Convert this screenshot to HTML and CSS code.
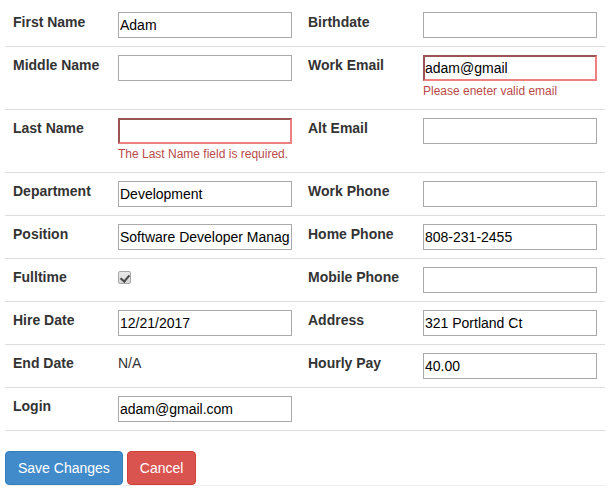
FILE: index.html
```html
<!DOCTYPE html>
<html lang="en">
<head>
<meta charset="utf-8">
<title>Edit Employee</title>
<link rel="stylesheet" href="styles.css">
</head>
<body>
<form class="employee-form">
  <div class="form-grid">
    <div class="cell label">First Name</div>
    <div class="cell"><input class="field" type="text" value="Adam"></div>
    <div class="cell label">Birthdate</div>
    <div class="cell"><input class="field" type="text" value=""></div>

    <div class="cell label">Middle Name</div>
    <div class="cell"><input class="field" type="text" value=""></div>
    <div class="cell label">Work Email</div>
    <div class="cell">
      <input class="field field-error" type="text" value="adam@gmail">
      <span class="error-text">Please eneter valid email</span>
    </div>

    <div class="cell label">Last Name</div>
    <div class="cell">
      <input class="field field-error" type="text" value="">
      <span class="error-text">The Last Name field is required.</span>
    </div>
    <div class="cell label">Alt Email</div>
    <div class="cell"><input class="field" type="text" value=""></div>

    <div class="cell label">Department</div>
    <div class="cell"><input class="field" type="text" value="Development"></div>
    <div class="cell label">Work Phone</div>
    <div class="cell"><input class="field" type="text" value=""></div>

    <div class="cell label">Position</div>
    <div class="cell"><input class="field" type="text" value="Software Developer Manager"></div>
    <div class="cell label">Home Phone</div>
    <div class="cell"><input class="field" type="text" value="808-231-2455"></div>

    <div class="cell label">Fulltime</div>
    <div class="cell"><input class="check" type="checkbox" checked disabled></div>
    <div class="cell label">Mobile Phone</div>
    <div class="cell"><input class="field" type="text" value=""></div>

    <div class="cell label">Hire Date</div>
    <div class="cell"><input class="field" type="text" value="12/21/2017"></div>
    <div class="cell label">Address</div>
    <div class="cell"><input class="field" type="text" value="321 Portland Ct"></div>

    <div class="cell label">End Date</div>
    <div class="cell value">N/A</div>
    <div class="cell label">Hourly Pay</div>
    <div class="cell"><input class="field" type="text" value="40.00"></div>

    <div class="cell label">Login</div>
    <div class="cell"><input class="field" type="text" value="adam@gmail.com"></div>
    <div class="cell label"></div>
    <div class="cell"></div>
  </div>

  <div class="actions">
    <button type="submit" class="btn btn-primary">Save Changes</button>
    <button type="button" class="btn btn-danger">Cancel</button>
  </div>
  <div class="footer-rule"></div>
</form>
</body>
</html>
```

FILE: styles.css
```css
* {
  box-sizing: border-box;
}

html, body {
  margin: 0;
  background: #fff;
}

body {
  padding: 3px 6px 0 5px;
  font-family: "Liberation Sans", Arial, Helvetica, sans-serif;
  font-size: 14px;
  line-height: 20px;
  color: #333;
}

.employee-form {
  width: 600px;
}

.form-grid {
  display: grid;
  grid-template-columns: 105px 190px 115px 190px;
  border-bottom: 1px solid #ddd;
}

.cell {
  min-height: 43px;
  padding: 8px;
  border-top: 1px solid #ddd;
}

.cell:nth-child(-n+4) {
  border-top-color: transparent;
}

.label {
  font-weight: bold;
  color: #333;
}

.value {
  color: #333;
}

.field {
  display: block;
  width: 174px;
  height: 26px;
  margin: 0;
  padding: 1px 1px;
  border: 1px solid #a9a9a9;
  border-radius: 0;
  background: #fff;
  font-family: "Liberation Sans", Arial, Helvetica, sans-serif;
  font-size: 14px;
  color: #000;
  outline: none;
}

.field-error {
  border: 2px inset #f08080;
  padding: 0;
}

.error-text {
  display: block;
  font-size: 12px;
  line-height: 20px;
  color: #b94a48;
}

.check {
  -webkit-appearance: none;
  appearance: none;
  position: relative;
  display: block;
  width: 13px;
  height: 13px;
  margin: 4px 0 0 0;
  border: 1px solid #a6a6a6;
  border-radius: 2px;
  background: linear-gradient(#e9e9e9, #d8d8d8);
}

.check::after {
  content: "";
  position: absolute;
  left: 3px;
  top: 1px;
  width: 4px;
  height: 7px;
  border-right: 2px solid #4a4a4a;
  border-bottom: 2px solid #4a4a4a;
  transform: rotate(40deg);
}

.actions {
  display: flex;
  gap: 4px;
  margin-top: 20px;
}

.btn {
  display: inline-block;
  height: 34px;
  padding: 6px 12px;
  border: 1px solid transparent;
  border-radius: 4px;
  font-family: "Liberation Sans", Arial, Helvetica, sans-serif;
  font-size: 14px;
  line-height: 20px;
  color: #fff;
  cursor: pointer;
}

.btn-primary {
  background: #428bca;
  border-color: #357ebd;
}

.btn-danger {
  background: #d9534f;
  border-color: #d43f3a;
}

.footer-rule {
  border-top: 1px solid #eee;
  margin-top: 0;
}
```
